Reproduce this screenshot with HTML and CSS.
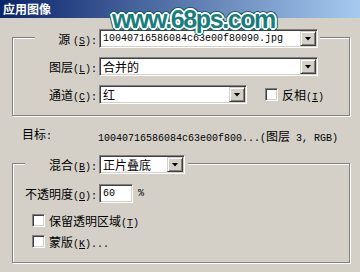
FILE: index.html
```html
<!DOCTYPE html>
<html lang="zh-CN">
<head>
    <meta charset="UTF-8">
    <title>应用图像</title>
    <link rel="stylesheet" href="styles.css">
</head>
<body>
    <div class="titlebar"><span class="title">应用图像</span></div>
    <div class="watermark">www.68ps.com</div>

    <div class="dialog">
        <div class="group g1">
            <div class="head">
                <label class="lbl">源 <span class="m">(<u>S</u>):</span></label>
                <div class="field sel w-src"><span class="m">10040716586084c63e00f80090.jpg</span><i class="btn"></i></div>
            </div>
            <div class="row">
                <label class="lbl">图层<span class="m">(<u>L</u>):</span></label>
                <div class="field sel w-src">合并的<i class="btn"></i></div>
            </div>
            <div class="row">
                <label class="lbl">通道<span class="m">(<u>C</u>):</span></label>
                <div class="field sel w-ch">红<i class="btn"></i></div>
                <span class="check inline"></span>
                <span class="ck-label">反相<span class="m">(<u>I</u>)</span></span>
            </div>
        </div>

        <div class="target">
            <span class="t-lbl">目标<span class="m">:</span></span>
            <span class="m">10040716586084c63e00f800...(<span class="cjk">图层</span> 3, RGB)</span>
        </div>

        <div class="group g2">
            <div class="head">
                <label class="lbl">混合<span class="m">(<u>B</u>):</span></label>
                <div class="field sel w-blend">正片叠底<i class="btn"></i></div>
            </div>
            <div class="row">
                <label class="lbl">不透明度<span class="m">(<u>O</u>):</span></label>
                <div class="field w-op"><span class="m">60</span></div>
                <span class="m pct">%</span>
            </div>
            <div class="checkrow first">
                <span class="check"></span>
                <span class="ck-label">保留透明区域<span class="m">(<u>T</u>)</span></span>
            </div>
            <div class="checkrow">
                <span class="check"></span>
                <span class="ck-label">蒙版<span class="m">(<u>K</u>)...</span></span>
            </div>
        </div>
    </div>
</body>
</html>
```

FILE: styles.css
```css
body {
    margin: 0;
    width: 360px;
    height: 272px;
    overflow: hidden;
    position: relative;
    background: #d4d0c8;
    color: #000;
    font: 12px "Noto Sans CJK SC", sans-serif;
}
.m {
    font: 10px "Liberation Mono", monospace;
}
.cjk {
    font: 12px "Noto Sans CJK SC", sans-serif;
}
u {
    text-underline-offset: 1px;
}

/* title bar + watermark */
.titlebar {
    display: flex;
    align-items: center;
    height: 18px;
    padding-left: 3px;
    background: linear-gradient(to right, #0a246a, #a6caf0);
}
.title {
    font-weight: bold;
    font-size: 12px;
    line-height: 16px;
    color: #fff;
    white-space: nowrap;
}
.watermark {
    position: absolute;
    left: 112px;
    top: 7px;
    font: bold 25px/25px "Liberation Sans", sans-serif;
    letter-spacing: -1.4px;
    color: #1a7c7c;
    text-shadow: 1px 0 #fff, -1px 0 #fff, 0 1px #fff, 0 -1px #fff,
        1px 1px #fff, -1px -1px #fff, 1px -1px #fff, -1px 1px #fff,
        2px 0 #fff, -2px 0 #fff, 0 2px #fff, 0 -2px #fff,
        3px 0 #0f5f5f, -3px 0 #0f5f5f, 0 3px #0f5f5f, 0 -3px #0f5f5f,
        2px 2px #0f5f5f, -2px -2px #0f5f5f, 2px -2px #0f5f5f, -2px 2px #0f5f5f;
}

.dialog {
    padding-left: 12px;
}

/* etched group boxes */
.group {
    width: 338px;
    box-sizing: border-box;
    border: 1px solid #808080;
    box-shadow: inset 1px 1px #fff, 1px 1px #fff;
}
.g1 {
    margin-top: 19px;
    padding-bottom: 11px;
}
.g2 {
    margin-top: 22px;
    padding-bottom: 14px;
}
.head {
    display: flex;
    align-items: center;
    width: fit-content;
    height: 19px;
    margin-top: -9px;
    background: #d4d0c8;
}
.g1 .head {
    margin-left: 22px;
    padding-right: 2px;
}
.g1 .head .lbl {
    width: 62px;
}
.g2 .head {
    margin-left: 12px;
    padding-right: 3px;
}
.g2 .head .lbl {
    width: 72px;
}
.row {
    display: flex;
    align-items: center;
    height: 19px;
    margin-top: 9px;
}
.g2 .row {
    margin-top: 10px;
}
.lbl {
    flex: none;
    width: 84px;
    margin-right: 2px;
    text-align: right;
    white-space: nowrap;
}

/* sunken fields */
.field, .check {
    box-sizing: border-box;
    background: #fff;
    border: 1px solid;
    border-color: #808080 #fff #fff #808080;
    box-shadow: inset 1px 1px #404040, inset -1px -1px #d4d0c8;
}
.field {
    flex: none;
    display: flex;
    align-items: center;
    height: 19px;
    padding-left: 3px;
    white-space: nowrap;
}
.w-src { width: 219px; }
.w-ch { width: 148px; }
.w-blend { width: 86px; }
.w-op { width: 34px; }
.btn {
    flex: none;
    display: flex;
    align-items: center;
    justify-content: center;
    box-sizing: border-box;
    width: 16px;
    height: 15px;
    margin-left: auto;
    margin-right: 1px;
    background: #d4d0c8;
    border: 1px solid;
    border-color: #d4d0c8 #404040 #404040 #d4d0c8;
    box-shadow: inset 1px 1px #fff, inset -1px -1px #808080;
}
.btn::after {
    content: "";
    width: 7px;
    height: 4px;
    background: #000;
    clip-path: polygon(0 0, 100% 0, 50% 100%);
}
.check {
    flex: none;
    width: 13px;
    height: 13px;
}
.check.inline {
    margin-left: 18px;
}
.ck-label {
    margin-left: 4px;
    white-space: nowrap;
}
.pct {
    margin-left: 5px;
}

.target {
    display: flex;
    height: 14px;
    line-height: 14px;
    margin-top: 11px;
    white-space: nowrap;
}
.t-lbl {
    width: 76px;
    margin-left: 10px;
}

.checkrow {
    display: flex;
    align-items: center;
    height: 13px;
    margin: 8px 0 0 19px;
}
.checkrow.first {
    margin-top: 11px;
}
```
